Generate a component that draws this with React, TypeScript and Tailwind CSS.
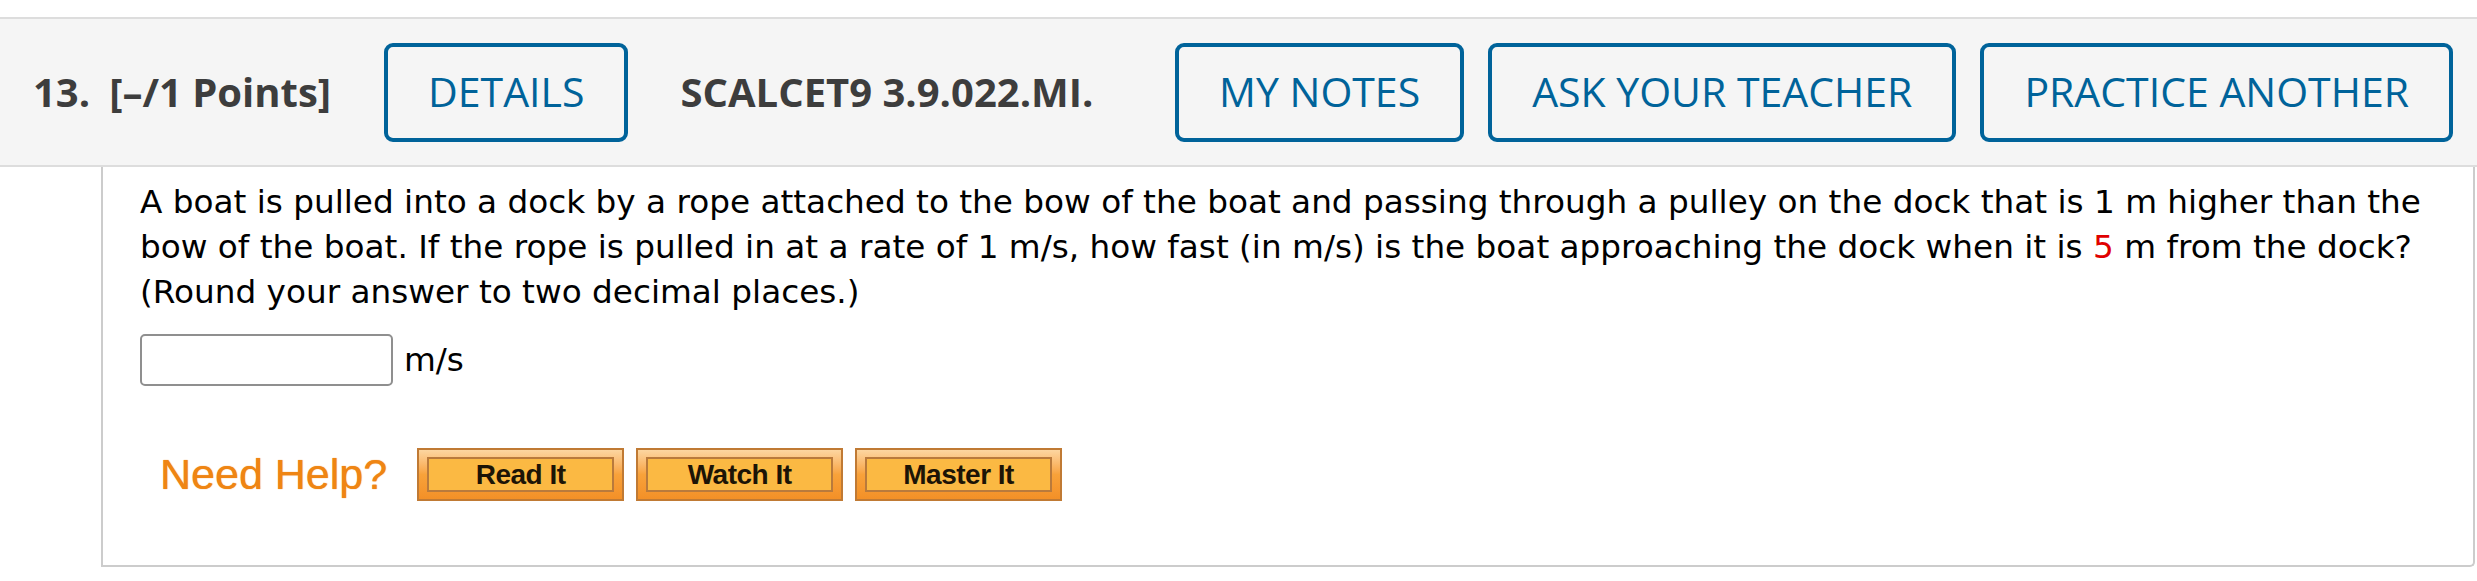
const openSans = { fontFamily: '"Open Sans", "Liberation Sans", sans-serif' }

function HeaderButton({ label }: { label: string }) {
  return (
    <button
      type="button"
      className="flex h-[99px] items-center justify-center rounded-[9px] border-4 border-[#00639a] bg-transparent px-[40px] text-[41px] font-medium text-[#00639a]"
    >
      {label}
    </button>
  )
}

function HelpButton({ label }: { label: string }) {
  return (
    <button
      type="button"
      className="h-[53px] w-[207px] border-2 border-[#c07a34] bg-gradient-to-b from-[#fcd6a0] via-[#f8a23a] to-[#f39027] px-[8px] pb-[7px] pt-[7px]"
    >
      <span className="flex h-full w-full items-center justify-center border-2 border-[#b97a3c] bg-[#fbb943] font-['Liberation_Sans',Arial,sans-serif] text-[28px] font-bold tracking-[-0.5px] text-[#1c1406]">
        {label}
      </span>
    </button>
  )
}

export default function App() {
  return (
    <div className="min-h-[581px] w-full bg-white">
      {/* question header */}
      <header
        style={openSans}
        className="mt-[17px] flex h-[150px] items-center border-y-2 border-[#dddddd] bg-[#f5f5f5] pl-[33px] pr-[24px] text-[#3d3d3d]"
      >
        <span className="text-[40px] font-bold">13.</span>
        <span className="ml-[19px] text-[40px] font-bold">[–/1 Points]</span>
        <div className="ml-[53px]">
          <HeaderButton label="DETAILS" />
        </div>
        <span className="ml-[52px] text-[40px] font-bold">SCALCET9 3.9.022.MI.</span>
        <div className="ml-auto flex items-center gap-[24px]">
          <HeaderButton label="MY NOTES" />
          <HeaderButton label="ASK YOUR TEACHER" />
          <HeaderButton label="PRACTICE ANOTHER" />
        </div>
      </header>

      {/* question body */}
      <section className="ml-[101px] mr-[2px] h-[400px] rounded-br-[5px] border-x-2 border-b-2 border-[#cccccc] pl-[37px] pt-[13px] font-['DejaVu_Sans',Verdana,sans-serif] text-[32.7px] leading-[45px] text-black">
        <p className="whitespace-nowrap">
          A boat is pulled into a dock by a rope attached to the bow of the boat and passing through a pulley on the dock that is 1 m higher than the
          <br />
          bow of the boat. If the rope is pulled in at a rate of 1 m/s, how fast (in m/s) is the boat approaching the dock when it is{' '}
          <span className="text-[#e00000]">5</span> m from the dock?
          <br />
          (Round your answer to two decimal places.)
        </p>

        <div className="mt-[19px] flex items-center gap-[11px]">
          <input
            type="text"
            className="h-[52px] w-[253px] rounded-[5px] border-2 border-[#8f8f8f] bg-white"
          />
          <span>m/s</span>
        </div>

        <div className="mt-[62px] flex items-center">
          <span className="ml-[20px] mr-[30px] font-['Liberation_Sans',Arial,sans-serif] text-[43px] leading-none text-[#ef8513] [text-shadow:0_0_1px_#ef8513]">
            Need Help?
          </span>
          <div className="flex gap-[12px]">
            <HelpButton label="Read It" />
            <HelpButton label="Watch It" />
            <HelpButton label="Master It" />
          </div>
        </div>
      </section>
    </div>
  )
}
